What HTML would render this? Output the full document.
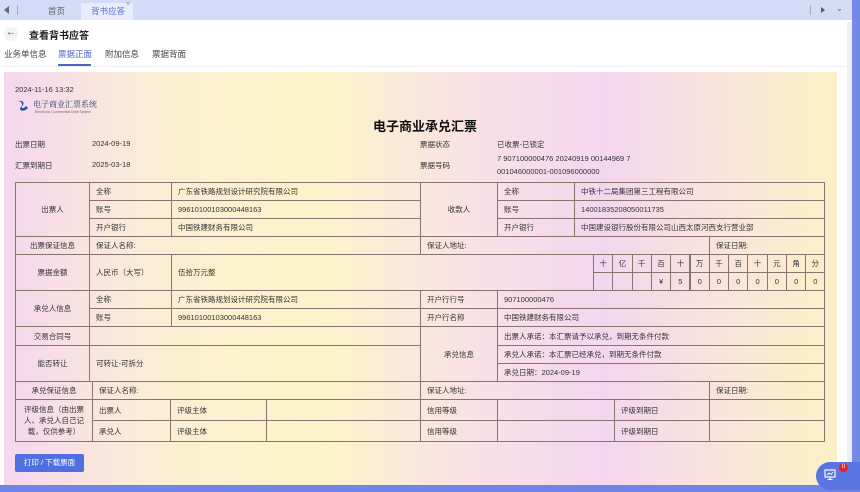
<!DOCTYPE html>
<html><head><meta charset="utf-8">
<style>
*{margin:0;padding:0;box-sizing:border-box}
body{width:860px;height:492px;overflow:hidden;background:#fff;font-family:"Liberation Sans","Noto Sans CJK SC",sans-serif;color:#333;position:relative}
.a{position:absolute;white-space:nowrap}
.c{position:absolute;border:1px solid #8a7470;font-size:7.5px;color:#333;display:flex;align-items:center;padding-left:6px;white-space:nowrap}
.m{justify-content:center;padding-left:0;text-align:center}
.t{font-size:7.5px;color:#333}
</style></head><body>
<!-- top tab bar -->
<div class="a" style="left:0;top:0;width:852px;height:20px;background:#d3dbf7"></div>
<div class="a" style="left:4px;top:6px;width:0;height:0;border-top:4px solid transparent;border-bottom:4px solid transparent;border-right:5px solid #667"></div>
<div class="a" style="left:17px;top:5px;width:1px;height:10px;background:#aab"></div>
<div class="a" style="left:48px;top:5px;font-size:8.5px;color:#666">首页</div>
<div class="a" style="left:81px;top:3px;width:52px;height:17px;background:#e9edfb"></div>
<div class="a" style="left:91px;top:5px;font-size:8.5px;color:#5a6fd0">背书应答</div>
<div class="a" style="left:126px;top:1px;font-size:7px;color:#889">×</div>
<div class="a" style="left:810px;top:5px;width:1px;height:10px;background:#aab"></div>
<div class="a" style="left:821px;top:7px;width:0;height:0;border-top:3.5px solid transparent;border-bottom:3.5px solid transparent;border-left:4px solid #556"></div>
<div class="a" style="left:836px;top:4px;font-size:8px;color:#667">⌄</div>
<!-- right blue bar & scroll -->
<div class="a" style="left:852px;top:0;width:8px;height:492px;background:#7489e8"></div>
<div class="a" style="left:847px;top:22px;width:5px;height:463px;background:#eef0f3"></div>
<!-- header -->
<div class="a" style="left:4px;top:27px;width:14px;height:14px;border-radius:50%;background:#f2f3f7"></div>
<div class="a" style="left:6px;top:27px;font-size:10px;color:#445">←</div>
<div class="a" style="left:29px;top:27px;font-size:10px;font-weight:bold;color:#222">查看背书应答</div>
<div class="a" style="left:4px;top:48px;font-size:8.5px;color:#444">业务单信息</div>
<div class="a" style="left:58px;top:48px;font-size:8.5px;color:#4a64c8">票据正面</div>
<div class="a" style="left:58px;top:64px;width:33px;height:2px;background:#4a64c8"></div>
<div class="a" style="left:105px;top:48px;font-size:8.5px;color:#444">附加信息</div>
<div class="a" style="left:152px;top:48px;font-size:8.5px;color:#444">票据背面</div>
<div class="a" style="left:0;top:66px;width:846px;height:1px;background:#eceef2"></div>
<!-- ticket bg -->
<div class="a" style="left:4px;top:72px;width:833px;height:413px;background:linear-gradient(90deg,#f6d6ef 0%,#fbeed4 18%,#fcf3c8 38%,#f9e2e4 55%,#f5d6f0 72%,#fae6d8 88%,#fcf0c6 100%)"></div>
<div class="a" style="left:0;top:485px;width:860px;height:7px;background:#6f84e4"></div>
<div class="a t" style="left:15px;top:85px">2024-11-16 13:32</div>
<svg class="a" style="left:14px;top:98px" width="16" height="16" viewBox="0 0 16 16"><path d="M2 4 C6 1 10 6 7 9 C4 12 9 15 14 10 L12 8 C9 12 6 10 9 7 C11 4 7 1 2 4Z" fill="#1f4fa8"/></svg>
<div class="a" style="left:33px;top:99px;font-size:8px;color:#2a3a70;font-family:'Noto Serif CJK SC',serif">电子商业汇票系统</div>
<div class="a" style="left:35px;top:110px;font-size:3.5px;color:#667">Electronic Commercial Draft System</div>
<div class="a" style="left:373px;top:116px;font-size:13px;font-weight:bold;color:#111">电子商业承兑汇票</div>
<div class="a t" style="left:15px;top:139px">出票日期</div>
<div class="a t" style="left:92px;top:139px">2024-09-19</div>
<div class="a t" style="left:15px;top:160px">汇票到期日</div>
<div class="a t" style="left:92px;top:160px">2025-03-18</div>
<div class="a t" style="left:420px;top:139px">票据状态</div>
<div class="a t" style="left:497px;top:139px">已收票-已锁定</div>
<div class="a t" style="left:420px;top:160px">票据号码</div>
<div class="a t" style="left:497px;top:154px">7 907100000476 20240919 00144969 7</div>
<div class="a t" style="left:497px;top:167px">001046000001-001096000000</div>
<!-- table -->
<div class="c m" style="left:15px;top:182px;width:75px;height:55px">出票人</div>
<div class="c" style="left:89px;top:182px;width:83px;height:19px">全称</div>
<div class="c" style="left:171px;top:182px;width:250px;height:19px">广东省铁路规划设计研究院有限公司</div>
<div class="c" style="left:89px;top:200px;width:83px;height:19px">账号</div>
<div class="c" style="left:171px;top:200px;width:250px;height:19px">99610100103000448163</div>
<div class="c" style="left:89px;top:218px;width:83px;height:19px">开户银行</div>
<div class="c" style="left:171px;top:218px;width:250px;height:19px">中国铁建财务有限公司</div>
<div class="c m" style="left:420px;top:182px;width:78px;height:55px">收款人</div>
<div class="c" style="left:497px;top:182px;width:78px;height:19px">全称</div>
<div class="c" style="left:574px;top:182px;width:251px;height:19px">中铁十二局集团第三工程有限公司</div>
<div class="c" style="left:497px;top:200px;width:78px;height:19px">账号</div>
<div class="c" style="left:574px;top:200px;width:251px;height:19px">14001835208050011735</div>
<div class="c" style="left:497px;top:218px;width:78px;height:19px">开户银行</div>
<div class="c" style="left:574px;top:218px;width:251px;height:19px">中国建设银行股份有限公司山西太原河西支行营业部</div>
<div class="c m" style="left:15px;top:236px;width:75px;height:19px">出票保证信息</div>
<div class="c" style="left:89px;top:236px;width:332px;height:19px">保证人名称:</div>
<div class="c" style="left:420px;top:236px;width:290px;height:19px">保证人地址:</div>
<div class="c" style="left:709px;top:236px;width:116px;height:19px">保证日期:</div>
<div class="c m" style="left:15px;top:254px;width:75px;height:37px">票据金额</div>
<div class="c" style="left:89px;top:254px;width:83px;height:37px">人民币（大写）</div>
<div class="c" style="left:171px;top:254px;width:423px;height:37px">伍拾万元整</div>
<div class="c m" style="left:593px;top:254px;width:20.3px;height:19px">十</div>
<div class="c m" style="left:612.3px;top:254px;width:20.3px;height:19px">亿</div>
<div class="c m" style="left:631.6px;top:254px;width:20.3px;height:19px">千</div>
<div class="c m" style="left:650.9px;top:254px;width:20.3px;height:19px">百</div>
<div class="c m" style="left:670.2px;top:254px;width:20.3px;height:19px">十</div>
<div class="c m" style="left:689.5px;top:254px;width:20.3px;height:19px">万</div>
<div class="c m" style="left:708.8px;top:254px;width:20.3px;height:19px">千</div>
<div class="c m" style="left:728.1px;top:254px;width:20.3px;height:19px">百</div>
<div class="c m" style="left:747.4px;top:254px;width:20.3px;height:19px">十</div>
<div class="c m" style="left:766.7px;top:254px;width:20.3px;height:19px">元</div>
<div class="c m" style="left:786px;top:254px;width:20.3px;height:19px">角</div>
<div class="c m" style="left:805.3px;top:254px;width:20px;height:19px">分</div>
<div class="c m" style="left:593px;top:272px;width:20.3px;height:19px"></div>
<div class="c m" style="left:612.3px;top:272px;width:20.3px;height:19px"></div>
<div class="c m" style="left:631.6px;top:272px;width:20.3px;height:19px"></div>
<div class="c m" style="left:650.9px;top:272px;width:20.3px;height:19px">¥</div>
<div class="c m" style="left:670.2px;top:272px;width:20.3px;height:19px">5</div>
<div class="c m" style="left:689.5px;top:272px;width:20.3px;height:19px">0</div>
<div class="c m" style="left:708.8px;top:272px;width:20.3px;height:19px">0</div>
<div class="c m" style="left:728.1px;top:272px;width:20.3px;height:19px">0</div>
<div class="c m" style="left:747.4px;top:272px;width:20.3px;height:19px">0</div>
<div class="c m" style="left:766.7px;top:272px;width:20.3px;height:19px">0</div>
<div class="c m" style="left:786px;top:272px;width:20.3px;height:19px">0</div>
<div class="c m" style="left:805.3px;top:272px;width:20px;height:19px">0</div>
<div class="c m" style="left:15px;top:290px;width:75px;height:37px">承兑人信息</div>
<div class="c" style="left:89px;top:290px;width:83px;height:19px">全称</div>
<div class="c" style="left:171px;top:290px;width:250px;height:19px">广东省铁路规划设计研究院有限公司</div>
<div class="c" style="left:89px;top:308px;width:83px;height:19px">账号</div>
<div class="c" style="left:171px;top:308px;width:250px;height:19px">99610100103000448163</div>
<div class="c" style="left:420px;top:290px;width:78px;height:19px">开户行行号</div>
<div class="c" style="left:497px;top:290px;width:328px;height:19px">907100000476</div>
<div class="c" style="left:420px;top:308px;width:78px;height:19px">开户行名称</div>
<div class="c" style="left:497px;top:308px;width:328px;height:19px">中国铁建财务有限公司</div>
<div class="c m" style="left:15px;top:326px;width:75px;height:20px">交易合同号</div>
<div class="c" style="left:89px;top:326px;width:332px;height:20px"></div>
<div class="c m" style="left:15px;top:345px;width:75px;height:37px">能否转让</div>
<div class="c" style="left:89px;top:345px;width:332px;height:37px">可转让-可拆分</div>
<div class="c m" style="left:420px;top:326px;width:78px;height:56px">承兑信息</div>
<div class="c" style="left:497px;top:326px;width:328px;height:20px">出票人承诺：本汇票请予以承兑，到期无条件付款</div>
<div class="c" style="left:497px;top:345px;width:328px;height:19px">承兑人承诺：本汇票已经承兑，到期无条件付款</div>
<div class="c" style="left:497px;top:363px;width:328px;height:19px">承兑日期：2024-09-19</div>
<div class="c m" style="left:15px;top:381px;width:78px;height:19px">承兑保证信息</div>
<div class="c" style="left:92px;top:381px;width:329px;height:19px">保证人名称:</div>
<div class="c" style="left:420px;top:381px;width:290px;height:19px">保证人地址:</div>
<div class="c" style="left:709px;top:381px;width:116px;height:19px">保证日期:</div>
<div class="c m" style="left:15px;top:399px;width:78px;height:43px;white-space:normal;line-height:11px;padding:0 3px">评级信息（由出票人、承兑人自己记载，仅供参考）</div>
<div class="c" style="left:92px;top:399px;width:79px;height:22px">出票人</div>
<div class="c" style="left:170px;top:399px;width:97px;height:22px">评级主体</div>
<div class="c" style="left:266px;top:399px;width:155px;height:22px"></div>
<div class="c" style="left:420px;top:399px;width:78px;height:22px">信用等级</div>
<div class="c" style="left:497px;top:399px;width:118px;height:22px"></div>
<div class="c" style="left:614px;top:399px;width:96px;height:22px">评级到期日</div>
<div class="c" style="left:709px;top:399px;width:116px;height:22px"></div>
<div class="c" style="left:92px;top:420px;width:79px;height:22px">承兑人</div>
<div class="c" style="left:170px;top:420px;width:97px;height:22px">评级主体</div>
<div class="c" style="left:266px;top:420px;width:155px;height:22px"></div>
<div class="c" style="left:420px;top:420px;width:78px;height:22px">信用等级</div>
<div class="c" style="left:497px;top:420px;width:118px;height:22px"></div>
<div class="c" style="left:614px;top:420px;width:96px;height:22px">评级到期日</div>
<div class="c" style="left:709px;top:420px;width:116px;height:22px"></div>
<!-- button -->
<div class="a" style="left:15px;top:454px;width:69px;height:18px;background:#4f6ee0;border-radius:2px;color:#fff;font-size:7.5px;line-height:18px;text-align:center">打印 / 下载票面</div>
<!-- floating -->
<div class="a" style="left:816px;top:462px;width:44px;height:28px;background:#5a74e2;border-radius:14px 0 0 14px"></div>
<svg class="a" style="left:824px;top:469px" width="12" height="12" viewBox="0 0 12 12"><rect x="1" y="1" width="10" height="7" fill="none" stroke="#fff" stroke-width="1.2"/><path d="M3 6 L5 4 L7 5.5 L9 3" fill="none" stroke="#fff" stroke-width="0.9"/><path d="M6 8 V10 M3.5 10.5 H8.5" stroke="#fff" stroke-width="1.1"/></svg>
<div class="a" style="left:839px;top:463px;width:9px;height:9px;border-radius:50%;background:#e8222a;color:#fff;font-size:6px;line-height:9px;text-align:center">0</div>
</body></html>
